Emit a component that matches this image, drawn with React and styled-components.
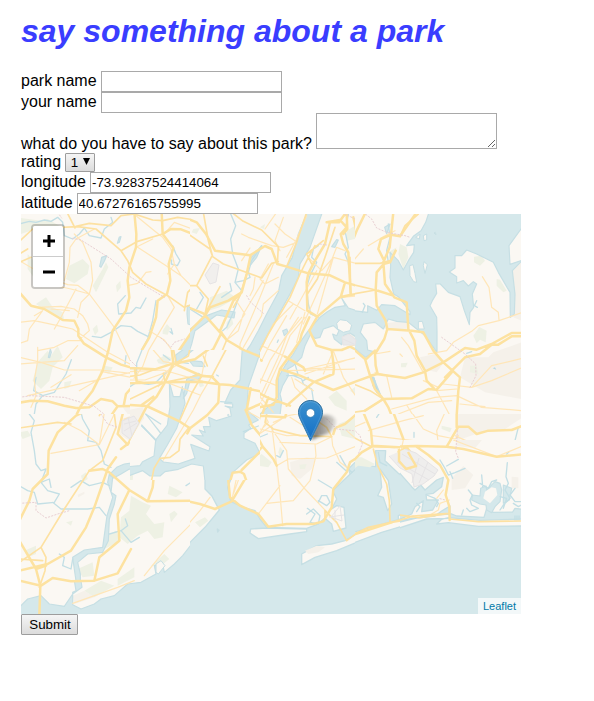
import React from "react";
import styled, { createGlobalStyle } from "styled-components";

const GlobalStyle = createGlobalStyle`
  body { margin: 0; background: #fff; color: #000; font: 16px/18px "Liberation Sans", Arial, sans-serif; }
  * { box-sizing: border-box; }
`;

const Page = styled.main`
  padding: 13px 0 0 21px;
`;
const Title = styled.h1`
  margin: 0 0 21px;
  color: #3a3dff;
  font-size: 32px;
  line-height: 37px;
  font-style: italic;
  font-weight: bold;
  white-space: nowrap;
`;
const Row = styled.label`
  display: flex;
  align-items: flex-start;
  gap: 4px;
  height: ${(p) => p.$height || 21}px;
  white-space: nowrap;
`;
const Caption = styled.span`
  padding-top: ${(p) => p.$drop ?? 1}px;
`;
const Field = styled.input`
  width: 181px;
  height: 21px;
  margin: 0;
  padding: 1px;
  border: 1px solid #a9a9a9;
  border-radius: 0;
  outline: 0;
  color: #000;
  background: #fff;
  font: 13.333px "Liberation Sans", Arial, sans-serif;
`;
const CommentBox = styled.textarea`
  width: 181px;
  height: 36px;
  padding: 2px;
  border: 1px solid #a9a9a9;
  border-radius: 0;
  outline: 0;
  resize: both;
  overflow: auto;
`;
const Button = styled.button`
  display: flex;
  align-items: center;
  justify-content: center;
  gap: ${(p) => p.$gap || 0}px;
  width: ${(p) => p.$width}px;
  height: ${(p) => p.$height}px;
  padding: 0 0 0 1px;
  border: 1px solid #9d9d9d;
  border-radius: 1px;
  color: #000;
  background: linear-gradient(#f5f5f5, #dcdcdc);
  font: 13.333px "Liberation Sans", Arial, sans-serif;
`;
const SelectArrow = styled.svg`
  margin-bottom: 2px;
`;
const MapFrame = styled.section`
  position: relative;
  width: 500px;
  height: 400px;
  overflow: hidden;
  background: #fbf8f3;
`;
const MapArt = styled.svg`
  display: block;
`;
const ZoomControl = styled.div`
  position: absolute;
  left: 10px;
  top: 10px;
  width: 34px;
  border: 2px solid rgba(0, 0, 0, 0.2);
  border-radius: 4px;
  background-clip: padding-box;
`;
const ZoomButton = styled.button`
  display: flex;
  align-items: center;
  justify-content: center;
  width: 30px;
  height: ${(p) => (p.$first ? 31 : 30)}px;
  padding: 0 0 0 1px;
  border: 0;
  border-bottom: ${(p) => (p.$first ? "1px solid #ccc" : "0")};
  border-radius: ${(p) => (p.$first ? "2px 2px 0 0" : "0 0 2px 2px")};
  background: #fff;
`;
const Marker = styled.svg`
  position: absolute;
  left: 277px;
  top: 186px;
`;
const Attribution = styled.a`
  position: absolute;
  right: 0;
  bottom: 0;
  width: 43px;
  height: 16px;
  padding-left: 5px;
  background: rgba(255, 255, 255, 0.7);
  color: #0078a8;
  font-size: 11px;
  line-height: 16px;
`;

const LAND = "#fbf8f3";
const WATER = "#d5e8eb";
const COAST = "#c6dfe4";

// Each sheet is drawn at three units per screen pixel.
const sheets = [
  {
    x: 0, y: 0, w: 169,
    parks: "M20 120L65 170L125 175L110 210L60 220L20 165Z M145 155L185 135L205 155L200 180L160 208L135 195Z M215 215L245 165L255 145L262 160L240 205L225 235Z M45 270L75 250L95 280L125 295L130 320L90 300Z M50 445L80 410L90 425L110 395L125 430L95 460L85 500L60 525L35 500Z M425 350L438 330L448 342L440 362L425 360Z M250 455L275 460L265 480L250 475Z M215 345L228 332L232 352L222 364Z M285 215L298 200L300 220L288 235Z M0 12L60 20L80 15L120 38L60 40L0 60Z M130 505L152 500L145 520L130 525Z M410 430L430 415L450 425L445 445L415 442Z",
    water: "M445 475L457 490L460 520L445 548L450 600H475L500 545L515 530V490L490 480L470 505L463 480Z M515 355L495 378L465 430L490 420L515 425Z M236 157L242 130L257 125L250 142L240 160Z M289 88L295 69L300 68L295 85Z M82 430L88 405L91 415L86 431Z M417 428L438 416L447 428L440 440L425 438Z M499 275L515 285V335L501 330L498 300Z",
    urban: "M305 580L375 578L400 600H320Z",
    streams: "M-5 30L25 22L45 25L70 18L90 22L110 10L125 25L130 65L155 75L175 60L190 42L205 65L240 72L250 45L275 25L270 10 M313 245L290 270L293 300L330 297L345 280L358 283L375 252 M214 367L240 371L270 355L300 335L330 338L350 352L382 368 M151 437L135 480L100 535L65 545L45 570L40 600M65 545L38 530L45 490 M315 425L312 450M455 95L465 120L477 140L469 155L451 150L452 138M405 260L395 320L380 375L355 420L350 450L355 500L385 502L405 485L440 480L450 445M450 343L455 360L447 353",
    major: "M-5 235L30 275L70 285L125 318L160 320L172 345L172 365L188 388L255 430L300 452L345 465L378 478L415 470L455 440L515 435M340 -5L346 60L345 100L325 160L320 200L325 250L315 290L275 350L262 410L245 470L215 530L180 575L165 605M-5 566L30 560L80 562L130 575L165 582L205 580L240 555L275 562L290 577L380 575M290 577L270 605M425 60L450 45L480 46L515 60M422 -5L425 60L457 102L443 150L448 200L438 240L410 260L405 310L385 370L350 430L345 465L350 500L315 540L308 575M515 350L470 415L445 480L435 507L400 545L375 577L410 605M435 510L380 540L362 578M345 480L372 505L435 505L515 500M435 505L470 515L515 528",
    mid: "M-5 82L35 45L80 42L170 38L225 45L300 110L320 140L335 175L375 210L440 245L490 280L515 270M138 -5L162 42M165 37L205 28L270 35L300 5L340 0L395 18L425 20L470 10L515 17M300 110L350 82L425 60M-5 145L30 130 M-5 120L20 105M490 290L500 235L515 220M400 460L515 470M438 505L515 475M375 577L440 515",
    minor: "M160 60L185 85L210 145L215 200L205 240L280 340L340 465M220 45L165 75L147 100L145 145L130 200M-5 140L80 190L140 212L170 214L205 240L180 265L170 310M80 210L150 225L205 240M50 280L120 277L160 285L185 305L200 330L205 350L180 372M-5 325L40 320L110 335L155 345L200 375L260 415L345 460M40 305L65 290L25 345L20 380L-5 388M50 400L50 440L40 500L45 545L30 580M50 410L100 400L140 380L185 380M-5 430L60 445L130 468L240 468L330 478M-5 450L130 440L170 395M20 545L330 475M90 520L150 482M240 472L330 490M345 5L400 50L425 70L450 105L460 150L480 185L515 220M350 100L440 158L480 185M440 245L460 280L370 430L365 475M345 100L395 75M320 215L350 208L375 175L390 173M460 150L440 180M385 350L430 378L450 405M515 45L460 25L430 60M400 520L515 480M460 560L515 535M175 530L235 495M425 495L450 440L515 445M90 285L145 290M165 225L120 310L100 345",
    dashed: "M110 -5L122 12M155 73L180 78L270 135L330 190L430 250M-5 550L30 545L130 550L220 577L255 605M420 372L450 400L460 385L490 375",
  },
  {
    x: 169, y: 0, w: 165,
    parks: "M60 250L110 230L130 245L125 260L90 280L55 290Z M470 50L495 35V75L470 80Z M415 550L440 530L470 560V590L435 575Z M210 40L225 30L222 45Z M10 45L30 42L20 60L5 55Z M110 350L130 330L125 310L110 325Z M480 530L500 515V545Z M25 505L45 508L35 520Z",
    urban: "M455 364L478 357L505 373V397L457 391Z",
    water: "M352 -5L325 60L307 130L275 185L265 235L230 300L205 350L180 395L152 435L150 480L135 520L128 605H165L180 560L183 485L190 440L215 395L250 330L300 240L325 190L330 150L360 100L397 -5Z M500 290L475 282L455 252L466 275L435 280L412 293L390 310L372 330L355 350L330 385L310 420L285 455L265 490L265 555L238 575L205 605H270L275 560L270 540L278 515L295 485L293 465L310 455L335 430L345 395L362 360L375 373L390 370L400 345L430 335L447 350L440 365L428 360L433 375L455 392L462 364L480 357L500 370Z M-5 350L50 305L95 288L135 294L132 312L80 303L50 325L15 350L5 390L-5 420Z M278 350L290 345L294 355L283 365Z M425 98L440 77L445 78L435 100Z M-5 452L35 455L40 470L10 485L-5 485L15 470L-5 463Z M180 135L215 95L200 130L180 155Z",
    land: "M440 328L450 317L470 320L485 333L480 350L460 355L443 345Z",
    streams: "M120 -5L137 35L122 75L128 120L145 165L135 205L155 230L145 255L132 290L110 340L98 350M0 285L40 310M30 235L40 250L20 285M95 250L125 230L120 208M215 95L185 140L175 175L180 190L160 200L135 205M385 95L370 105L365 130L380 145L360 185L350 220L355 270L362 300L385 310M310 485L335 495L340 510L365 525L370 558M340 500L355 490M90 568L145 570M265 378L262 385M475 0L465 50L475 100L465 120L475 145L480 190L482 245M455 250L475 245M315 450L325 485L290 485",
    major: "M-5 15L20 25L48 60L75 110L180 124L225 96L245 105L262 150L290 158L355 178L420 184L465 205L510 218M182 124L170 180L155 235L115 260L60 280L45 305L-5 355M-5 280L40 298L110 378L215 440M355 178L350 205L352 290L382 308L358 350L380 395L425 408L455 408L480 398L505 410M382 308L450 250L480 243L510 238M465 205L452 250M110 378L90 350L130 260L155 235M95 355L70 405L40 430L-5 435M-5 488L65 488L90 512L185 525M185 440L180 500L175 595L215 578L250 572L260 550L260 500L270 465L310 410L330 380L335 360L358 310M185 525L235 552L300 575M285 428L340 460L345 470M270 465L330 485L370 502L430 528L505 500M425 410L432 460L430 480L370 505L290 575M410 25L450 18L470 40L452 60L460 90L475 115L482 240M355 178L375 140L405 90L420 25M90 512L85 570L50 605M465 0L447 25L410 25M470 0L472 45L460 60M215 605L235 550M510 100L490 10",
    mid: "M-5 60L60 105L68 128L100 150L215 192L245 148L265 143M125 -5L160 22L215 48L265 98L262 150M-5 215L20 215L65 128M20 215L55 255L45 300L90 218M40 -5L55 80L68 128M350 -5L320 85L290 158M110 378L80 450L65 488M170 180L150 245L130 280M375 95L355 130L330 180L300 250L235 360L185 460M365 150L350 120L400 80M482 240L480 130M435 40L405 130L382 195L352 240",
    minor: "M155 60L175 70L245 95L280 100L320 85M260 -5L225 45M255 30L285 60L315 80M280 10L255 80L270 110M250 150L210 250L150 390L150 420M160 400L215 305L220 270L265 230M220 200L160 300L145 350L110 378M135 255L165 300L110 378M195 190L190 225L180 245M235 150L210 195L225 210L265 190M290 305L240 390L215 440M345 310L300 365L275 430L215 560M335 310L290 365L265 430L205 560M325 310L240 440L195 540M310 270L250 330L190 450M295 260L345 290M215 395L290 430L345 465M185 485L260 515M345 295L320 385M190 525L250 595M190 545L225 580M300 315L380 170M355 130L395 170L430 130L505 150M430 130L382 300M410 175L440 100L465 110M345 465L505 430M290 470L505 465M345 465L430 460M305 490L315 520L350 555M430 410L400 480M430 410L460 490L500 550M430 130L340 330M65 488L60 530L-5 605M90 512L25 570M315 495L370 530M455 250L510 245M505 390L470 400M40 430L55 455L40 430M-5 500L40 485M345 480L480 435L500 430M180 102L155 140M290 130L320 75L350 5",
    dashed: "M170 245L182 265L220 298M390 90L410 93M455 -5L505 20",
  },
  {
    x: 334, y: 0, w: 166,
    parks: "M357 128L380 125L390 140L375 155L357 145Z M425 195L435 197L455 230L445 235L425 215Z M355 365L373 339L395 350L392 385L375 377L365 388Z M135 90L155 100L160 130L145 165L130 120Z M100 115L125 100L115 125Z M138 448L158 446L152 460L138 460Z M345 455L365 455L370 480L345 475Z",
    urban: "M195 430L240 420L270 440L245 475L205 465Z M330 430L400 430L415 415L500 385V555L390 535L315 490Z M75 330L150 320L165 335L150 350L90 345Z M470 155L500 145V320L475 310Z M-5 380L25 395L20 410L-5 400Z",
    water: "M222 -5L212 25L198 50L175 67L155 95L178 92L176 115L160 140L145 168L130 140L105 115L107 155L105 190L116 240L130 248L165 293V302L120 275L80 272L65 289L38 275V295L-5 290V400L32 430L56 413L38 408L35 380L16 355L25 330L60 325L85 345L100 315L125 322L160 325L188 347L210 365L246 415V350L245 310L225 275L232 260L245 238L242 210L256 210L280 235L315 248L328 290L343 332L345 295L356 280L352 240L365 210L355 203L340 216L325 200L305 207V188L283 174L300 162V125L320 125L335 108L365 120L415 145L430 175L465 235L466 310L478 300L480 240L472 170L503 138L465 151L462 95L503 38V-5Z M89 40L105 30L95 60Z",
    land: "M164 155L174 152L180 178L185 205L176 203L165 185Z M207 143L217 152L210 178L205 155Z M205 65L215 60L215 78L207 80Z M182 70L195 60L193 75Z M237 57L241 55L243 62Z M190 323L202 322L208 345L190 345Z",
    streams: "M100 30L105 70L95 110L100 145M25 268L30 275L22 295M365 260L358 275L367 280M54 490L60 515L55 490L73 535M60 500L57 515M335 418L350 413",
    streamWater: "M50 488L58 490L65 515L78 540L65 538L52 515Z M413 463L420 460L424 467Z",
    major: "M115 -5L108 62L104 100L85 145L90 210L118 250L155 265L160 345L178 380L185 425L210 470L215 500L240 527M108 62L78 75L70 105L90 145L65 175L62 228L65 275L92 320L97 345L170 350L205 355L235 410L265 445L315 490L310 530L305 605M62 228L115 245M97 345L88 375L60 420L62 455L68 480L45 485L60 525L85 555L100 580L110 605M-5 505L65 480L150 492L205 475L265 445L330 402L365 407L410 390L470 357L503 357M270 490L330 430L375 420L410 392L430 392L470 367L503 367M85 555L170 553L220 525L245 527L290 475M-5 405L30 435L45 485M185 -5L150 45L135 67L108 62M32 -5L5 50L-5 75M122 110L105 145L85 150M60 410L32 437M30 590L85 555",
    mid: "M-5 212L62 228M-5 240L62 228M-5 148L75 148L105 140M190 0L150 35L135 67M-5 510L45 530L85 555M-5 595L30 590L85 555",
    minor: "M382 188L402 220L410 280L430 295L432 318M220 420L275 410L295 385L350 352L370 335L432 320L503 295M140 370L160 395L205 475M60 420L105 412M135 420L142 427M60 475L95 485L110 550M155 573L175 605M110 585L240 550L305 545L380 580L503 590M245 530L305 525M245 530L285 605M265 510L350 520L410 455L503 433M350 520L410 500L503 460M315 570L390 578M40 95L90 65L120 50M-5 140L25 105M130 600L220 565L290 560M205 500L250 520",
    dashed: "M25 -5L50 15L65 42L95 55L150 65L165 70M260 370L330 420L362 450L363 485L345 520",
  },
  {
    x: 0, y: 200, w: 169,
    urban: "M300 15L345 0L357 30L325 80L295 60Z M155 545L190 530L220 550L160 570Z M170 242L190 233L190 240L172 250Z",
    parks: "M180 185L195 175L200 195L185 205Z M330 245L365 265L390 275L375 300L400 330L430 325L425 370L400 375L380 350L350 365L320 390L295 370L300 310L325 290Z M250 370L285 350L300 380L250 405Z M170 465L215 445L220 485L185 490Z M445 215L485 235L465 250L440 240Z M390 455L430 420L445 435L420 455Z M-5 55L20 50L30 65L5 75Z M290 495L340 460L340 490L290 515Z M190 530L240 500L280 515L220 550Z M135 325L155 320L150 335Z M10 410L45 395L45 420L20 430Z M445 300L460 290L470 300L450 325Z",
    water: "M445 -5L430 30L440 45L420 55L400 95L380 112L342 122L345 145L310 150L287 160L265 182L278 192L300 180L325 165L360 167L380 182L415 180L435 170L515 165V138L470 152L410 160L397 155L412 130L455 80L475 30L478 -5Z M512 390L485 425L460 450L430 475L425 450L400 455L405 480L360 505L320 510L280 545L240 555L220 570L180 585L155 572L155 535L165 530L160 500L180 500L183 520L155 540L130 577L85 570L60 545L20 555L-5 580V605H512Z M265 180L260 205L275 250L258 305L245 400L190 408L155 430L162 480L165 500H178V480L170 445L200 420L245 415L262 380L265 315L280 270L285 245L270 235L275 190Z",
    land: "M405 450L420 440L432 455L412 480L405 475Z",
    streams: "M180 -5L185 15L205 50L200 80L225 85L240 110L250 150L270 160M25 0L40 20L30 55L40 110L45 150L60 170L75 165M75 165L60 205L80 230L115 240L100 265L50 270L40 235L20 230L-5 215M60 205L85 195L90 220M150 220L180 200L205 215L245 205L265 215M95 265L120 285L170 285L200 285L235 280L255 305M115 420L130 430L125 455L150 465L155 435M265 360L300 350L330 385L355 370M300 350L320 335L313 315M495 215L510 205",
    major: "M-5 320L25 260L35 225L80 180L83 110L110 55L165 5L185 -5M-5 470L80 450L150 410L195 340L220 280L260 165L285 130M205 170L245 165L265 175L325 228L380 262L510 260M325 228L290 300L295 380L235 430L220 500L150 502L95 492L60 515L-5 500M220 500L290 478L330 405M-5 380L45 465L58 515L55 605M45 465L75 455M305 0L290 60L320 92L375 -5M300 105L320 90M380 262L395 220L400 170L420 135L455 130L475 110L480 75L500 45L485 20L480 -5",
    mid: "M-5 42L110 25L150 30M280 0L285 40L265 90L245 140L205 170L130 285L60 400L-5 445M60 400L75 430L72 470L55 520M65 440L-5 435M240 -5L235 5",
    minor: "M130 25L180 50L235 92L90 118M235 92L280 0M250 -5L235 92M515 325L430 410L370 485M155 568L290 520L340 500M480 0L440 95L415 130M310 15L325 10L322 35L310 40Z",
    dashed: "M-5 268L45 265L45 290L75 312L110 300L145 290M240 0L260 30L290 40",
  },
  {
    x: 169, y: 200, w: 165, ocean: true,
    land: "M-5 152H30L45 170V225L65 245L88 288L45 340L-5 390Z M168 -5L178 28L148 43L178 48L175 75L190 75L200 100L180 115L165 145L130 178L113 220L122 262L160 280L195 290L210 315L230 340L350 343L380 332L405 313L425 330L430 352L468 342L462 280L440 275L425 285L440 255L428 230L465 195L512 150V-5Z M230 342L350 345V353L300 360L205 374L180 357L182 345Z M335 420L380 395L425 390L465 380L512 352V380L440 410L375 430L335 452Z M82 345L87 349L83 354Z",
    urban: "M300 145L350 130L375 135L365 165L330 195L305 185Z M345 410L380 395L405 400L385 415L355 420Z M370 0L430 15L420 65L390 60Z",
    parks: "M190 140L215 120L245 145L235 160L205 155Z M265 115L270 98L280 110L270 132Z M328 152L350 150L345 165H330Z M15 325L45 310L55 320L30 340Z M445 30L495 10V75L455 65Z",
    streams: "M345 -5L370 55M440 145L468 170M450 125L470 160L485 175M385 198L425 222M150 45L195 30M195 75L232 60M170 130L195 110M352 283L375 300L360 325L385 330L390 305L370 285L350 300M385 265L395 245L410 245L420 265L410 275L385 260M260 125L270 130L280 110",
    water: "M475 165L515 125V150L480 180Z",
    major: "M-5 262L30 270L75 285L125 262L150 220L168 190L160 172L130 172L115 200L120 250L150 275L205 300L235 338L290 330L370 330L400 322L425 280L430 225L470 175L480 145L510 125M168 -5L190 45L218 98L250 135L260 155M215 100L150 170M200 50L210 0M210 5L285 10L290 -5M440 40L465 30L500 0M430 60L435 45",
    mid: "M230 0L225 25L250 45L290 55L330 65L425 68M425 68L410 40L380 20M470 380L440 325L405 290M405 290L405 315M470 380L510 350",
    minor: "M210 45L290 65L360 63M270 85L380 90L425 68M375 90L378 125L360 200L310 260L230 268M245 35L260 155L270 240L278 335M260 155L295 135L410 132L440 120L515 90M270 215L205 300M-5 330L30 290L60 250M200 65L275 15M250 25L295 5L345 -5M230 20L170 130L130 240M215 100L140 190L125 260M300 10L340 35M510 85L470 50M225 5L235 25L220 40M440 325L345 225L295 165L290 110L245 45M470 160L450 145L428 95L425 68",
    dashed: "M410 15L440 45L490 50",
  },
  {
    x: 334, y: 200, w: 166, ocean: true,
    land: "M-5 -5H503V245L490 235L470 255V300L400 305L290 300L275 288L245 310L130 316V305L165 290L190 288L215 262L210 240L240 230L260 185L240 205L205 235L180 225L175 205L130 178L90 140L92 110L62 110V158L40 155L15 135L-5 145Z M-5 355L100 325L180 303L250 303L250 312L180 325L80 355L-5 387Z M248 335L255 318L280 310L390 318L503 315V335L390 335L280 328Z M75 165L100 200L105 235L110 270L98 290L85 250L68 245L80 220Z",
    parks: "M-5 130L20 130L60 150L45 160L10 155L-5 165Z M260 35L290 42L285 55L260 45Z",
    urban: "M305 -5H503V10L450 45L390 50L305 80Z",
    streams: "M177 55V70M490 40L480 80M75 -5L65 10M70 115L75 145L95 155",
    major: "M25 -5L48 50L52 95L130 100L185 97L275 98L310 38L340 38L365 60L400 50L470 48L503 35M115 -5L145 75L142 100L130 115L135 145M-5 140L20 115L50 98M305 -5L305 40M-5 362L110 325",
    mid: "M-5 70L50 98L120 100M55 105L68 155L95 210L103 260L105 325M110 325L180 305L240 300L285 295M-5 362L40 340L110 325L200 310",
    minor: "M40 50L145 20L205 5M170 -5L205 45L250 65L300 75L310 65M250 90L245 50L270 -5M300 65L430 125L503 95M50 65L175 80L185 100M-5 40L30 25",
    dashed: "M-5 45L15 65L22 90L10 120M307 50L303 120",
  },
  {
    x: 109, y: 136, w: 130, h: 130,
    urban: "M-5 180L40 170L42 205L-5 275Z",
    parks: "M80 30L105 15L125 25L110 45L85 40Z M205 100L218 96L222 108L210 112Z M-5 365L10 365L8 395H-5Z",
    water: "M337 -5L330 90L302 120L284 160L308 162V172L285 168L300 175L304 198L260 212L236 202L241 230L220 230L226 247L208 240L220 258L185 255L240 290L237 303L182 283L195 325L145 342L100 336L88 325L112 285L140 235L150 205L165 160L157 110L150 140L130 140L118 96L120 170L112 225L93 250L47 192L92 250L77 270L35 225L77 272L72 318L38 335L30 347L-5 350V378L38 362L60 378H90L105 365L145 358L185 342L220 348L225 395H300L305 370L350 330L390 310L375 280L342 265V250L363 235L356 225L385 210L350 180L355 110L395 -5Z M178 32L215 35L225 50L190 48Z M170 88L205 70L218 78L205 88L180 92L170 130L160 145Z M137 15L165 -5H195L165 20L140 45Z",
    land: "M292 195L296 193L297 200Z",
    streams: "M38 -5L20 40L20 98L55 103L75 100L100 75L130 50M100 15L120 30M135 35L175 40M0 110L18 98M260 75L265 78M272 155L305 158M35 228L78 270M48 193L92 222M340 245L385 228",
    major: "M125 -5L130 42L105 97L80 140L50 170L-5 275M-5 165L50 168L150 215L180 235L232 195L265 158L268 103L245 80L215 78L130 40L75 58L20 55L-5 55M105 97L215 95L268 103L300 105L350 115L395 125M240 -5L195 28L130 42M70 140L35 165M105 97L-5 100M180 235L172 250M347 180L365 225L395 260M300 395L308 368L330 365L342 372L350 395M395 300L335 360M362 115L350 180L395 160M330 -5L395 22M15 60L20 95L45 100",
    mid: "M130 -5L138 38L175 18L180 -5M215 78L185 130L150 210M175 235L150 268L147 302L120 322L90 325L72 355L64 395M290 -5L245 80M220 18L232 48M-5 80L30 75L75 58M115 95L210 75L250 80M-5 150L105 97L100 70",
    minor: "M58 -5L38 50L12 85M110 97L210 135M125 45L85 110M245 80L215 130L190 180L100 330M-5 65L100 60L220 95M230 0L215 78M-5 90L45 90L100 70L150 40M345 180L390 205M70 0L100 35L130 40",
    dashed: "M0 30L20 50",
  },
  {
    x: 379, y: 226, w: 121, h: 100, ocean: true,
    land: "M-5 -5H368V208L345 205L338 216L280 217L260 205L252 232L170 228L150 220L150 198L125 213L105 228L-5 240L35 222L45 200L70 182L65 215L98 210L115 180L80 180L78 163L100 160L125 140L130 112L110 120L75 150L62 135L45 150L35 140L-5 95Z M-5 247L80 227L150 222V235L80 237L-5 265Z M110 252L125 238L145 233L240 241L368 237V258L235 259L145 248Z",
    urban: "M155 115L190 78L220 105L195 145L155 150Z M335 110L355 112V145H335Z M170 -5H250L225 25L170 18Z",
    water: "M242 145L258 138L260 150L285 125L300 130L305 150L300 185L285 200L275 218L260 210L258 195L240 192L215 180L217 165L240 168Z M310 135L335 145L328 180L310 190Z",
    land2: "M255 155L275 142L288 145L292 165L270 190L250 175Z",
    streams: "M245 105L248 140M240 130L265 145L275 125L290 120M322 68L318 110L325 130L315 150L330 175L310 195L300 210M205 150L217 165L210 180L215 195L235 205L210 215L200 205M300 170L320 175L310 205M120 60L135 85L145 105L165 98L195 85M140 78L175 58M150 95L158 115M327 35L320 42M345 145L330 165L345 185L362 185M340 190L355 200L365 195M80 165L105 175L115 190L110 200M50 190L60 200L50 215M190 210L185 225M345 228V240M351 228V240M357 228V240",
    major: "M-5 20L50 18L140 20L155 -5M140 20L190 27L290 50L368 43M50 20L85 45L120 75L145 120L137 165L148 200L149 240M20 20L0 35L5 65L25 85L45 72L30 60L38 45L20 22",
    mid: "M-5 242L40 228L105 223L148 220M-5 225L60 233L148 220M149 237L235 245L368 243",
    minor: "M160 0L290 50L368 18M148 180L120 190L115 210L90 225M130 150L110 175M10 0L0 45",
    dashed: "M170 0L167 35L175 55M120 176L135 180",
  },
];

function Sheet({ data }) {
  const unit = data.w * 3;
  const height = data.h || 200;
  return (
    <svg x={data.x} y={data.y} width={data.w} height={height} viewBox={`0 0 ${unit} ${height * 3}`}>
      <rect width={unit} height={height * 3} fill={data.ocean ? WATER : LAND} />
      {data.ocean && <path d={data.land} fill={LAND} stroke={COAST} strokeWidth="4" strokeLinejoin="round" />}
      <path d={data.urban} fill="#f5f1ea" />
      <path d={data.parks} fill="#eef1e4" />
      <path d={data.water} fill={WATER} stroke={COAST} strokeWidth="3.5" strokeLinejoin="round" />
      {!data.ocean && <path d={data.land} fill={LAND} stroke={COAST} strokeWidth="3" />}
      <path d={data.land2} fill={LAND} />
      <path d={data.streamWater} fill="#b9d9e1" />
      <g fill="none" strokeLinejoin="round" strokeLinecap="round">
        <path d={data.streams} stroke="#c3dfe5" strokeWidth="4" />
        <path d={data.minor} stroke="#ffe6b8" strokeWidth="3.6" />
        <path d={data.mid} stroke="#fde1a2" strokeWidth="5" />
        <path d={data.major} stroke="#fde2a0" strokeWidth="7.5" />
        <path d={data.dashed} stroke="#e9d0d3" strokeWidth="3" strokeDasharray="4 6" />
      </g>
    </svg>
  );
}

function Airports() {
  return (
    <g fill="none" stroke="#e6e4e5" strokeWidth="1">
      <path d="M101 207L113 202L118 209L109 225L101 219ZM103 210L115 207M103 217L116 209M107 203L111 222" fill="#efedec" />
      <path d="M186 265L191 262L197 264L196 270L189 278L185 275ZM189 263L192 274M186 269L195 266" fill="#efedec" transform="translate(0 -1)" display="none" />
      <path d="M368 242L379 254L391 260L393 273L402 270L413 262L417 256L395 239L384 235M381 240L414 260M376 248L408 266M398 244L391 269M407 248L398 269" fill="#efeeed" />
      <path d="M321 123L328 120L335 126L334 131H322ZM322 125L333 130" fill="#e9e9ea" />
      <path d="M310 303L319 292L321 307ZM314 296V307M308 303L323 301" />
      <path d="M184 61L192 49L198 51L195 68L189 70Z" fill="#f1efed" />
    </g>
  );
}

function ParkMap() {
  return (
    <MapArt width="500" height="400" viewBox="0 0 500 400" aria-label="Map of New York City">
      {sheets.map((sheet) => <Sheet key={`${sheet.x}-${sheet.y}`} data={sheet} />)}
      <Airports />
      <path d="M378 235V247L385 255L395 252L391 245L387 238" fill="none" stroke="#fde19d" strokeWidth="2.5" strokeLinejoin="round" />
    </MapArt>
  );
}

function LocationMarker() {
  return (
    <Marker width="48" height="43" viewBox="0 0 48 43">
      <defs>
        <linearGradient id="pin" x2="0" y2="1">
          <stop stopColor="#3c91cf" />
          <stop offset="1" stopColor="#126fc6" />
        </linearGradient>
        <linearGradient id="pinEdge" x2="0" y2="1">
          <stop stopColor="#2e6c97" />
          <stop offset="1" stopColor="#3883b7" />
        </linearGradient>
        <linearGradient id="shadeFill" x1="0" x2="1">
          <stop stopColor="#000" stopOpacity=".55" />
          <stop offset="1" stopColor="#000" stopOpacity=".1" />
        </linearGradient>
        <filter id="shade" x="-30%" y="-30%" width="160%" height="160%">
          <feGaussianBlur stdDeviation="1.8" />
        </filter>
      </defs>
      <path d="M13 40L20 17Q30 12 37 18Q41 25 31 33Z" fill="url(#shadeFill)" filter="url(#shade)" />
      <path d="M12.5 .5C6 .5 .5 5.6 .5 12.3c0 2.6.8 4.9 1.9 7.1L12.5 40.6l10.1-21.2c1.1-2.2 1.9-4.5 1.9-7.1C24.5 5.6 19 .5 12.5 .5Z" fill="url(#pin)" stroke="url(#pinEdge)" />
      <path d="M12.5 1.7C6.6 1.7 1.7 6.3 1.7 12.4c0 2.4.7 4.4 1.7 6.4l9.1 19.2 9.1-19.2c1-2 1.7-4 1.7-6.4 0-6.1-4.9-10.7-10.8-10.7Z" fill="none" stroke="#fff" strokeOpacity=".15" />
      <circle cx="12.5" cy="13" r="4.3" fill="#fff" stroke="#2d75ab" strokeWidth=".7" />
    </Marker>
  );
}

export default function App() {
  return (
    <>
      <GlobalStyle />
      <Page>
        <Title>say something about a park</Title>
        <Row><Caption>park name</Caption><Field /></Row>
        <Row><Caption>your name</Caption><Field /></Row>
        <Row $height={40}><Caption $drop={22}>what do you have to say about this park?</Caption><CommentBox /></Row>
        <Row $height={19}>
          <Caption $drop={0}>rating</Caption>
          <Button type="button" $width={30} $height={19} $gap={5}>
            1
            <SelectArrow width="7" height="7" viewBox="0 0 7 7"><path d="M0 0H7L3.5 7Z" /></SelectArrow>
          </Button>
        </Row>
        <Row><Caption>longitude</Caption><Field defaultValue="-73.92837524414064" /></Row>
        <Row><Caption>latitude</Caption><Field defaultValue="40.67276165755995" /></Row>
        <MapFrame>
          <ParkMap />
          <LocationMarker />
          <ZoomControl>
            <ZoomButton $first aria-label="Zoom in"><svg width="12" height="12"><path d="M0 6H12M6 0V12" stroke="#000" strokeWidth="3" /></svg></ZoomButton>
            <ZoomButton aria-label="Zoom out"><svg width="12" height="12"><path d="M0 6H12" stroke="#000" strokeWidth="3" /></svg></ZoomButton>
          </ZoomControl>
          <Attribution>Leaflet</Attribution>
        </MapFrame>
        <Button type="button" $width={57} $height={21}>Submit</Button>
      </Page>
    </>
  );
}
